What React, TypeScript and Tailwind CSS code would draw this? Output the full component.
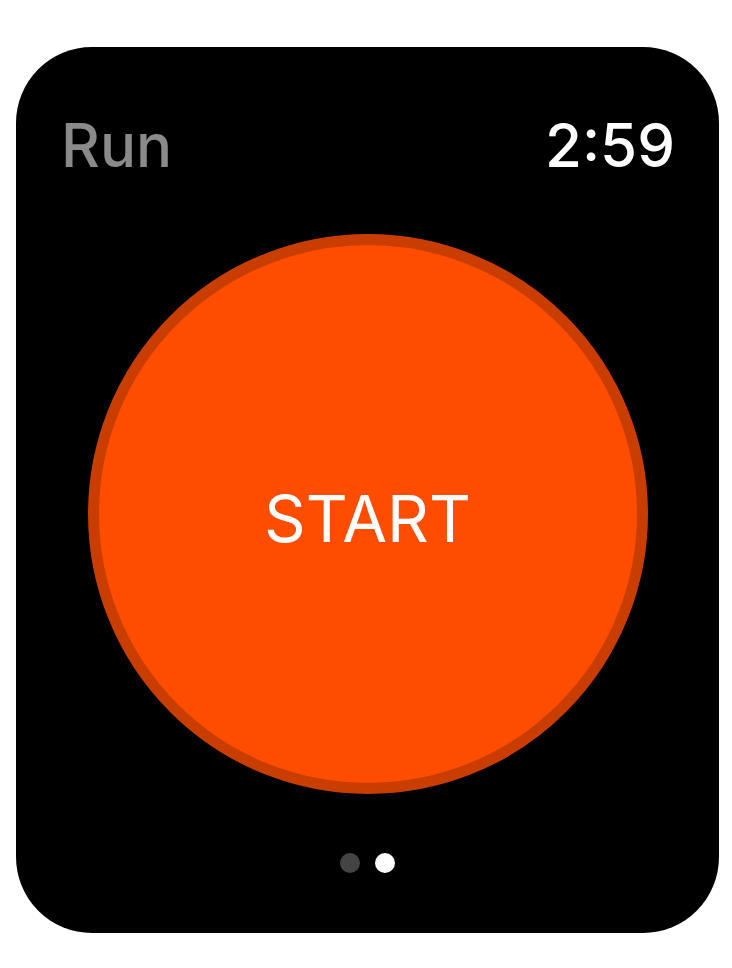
export default function App() {
  return (
    <div className="w-[732px] h-[968px] bg-white pt-[47px] pl-[16px]" style={{ fontFamily: 'Inter, "Noto Sans", sans-serif' }}>
      <div className="w-[703px] h-[886px] bg-black rounded-[76px] flex flex-col items-center pt-[68px]">
        {/* header */}
        <div className="w-full flex items-start justify-between pl-[45px] pr-[44px] text-[60px] leading-none">
          <span className="text-[#8a8a8a] font-medium">Run</span>
          <span className="text-white font-medium">2:59</span>
        </div>

        {/* start button */}
        <div className="mt-[59px] w-[560px] h-[560px] rounded-full bg-[#ff4d00] border-[11px] border-[#c93d00] flex items-center justify-center">
          <span className="text-white text-[65px] leading-none mt-[9px]">START</span>
        </div>

        {/* page dots */}
        <div className="mt-[59px] flex gap-[15px]">
          <div className="w-[20px] h-[20px] rounded-full bg-[#444444]" />
          <div className="w-[20px] h-[20px] rounded-full bg-white" />
        </div>
      </div>
    </div>
  )
}
